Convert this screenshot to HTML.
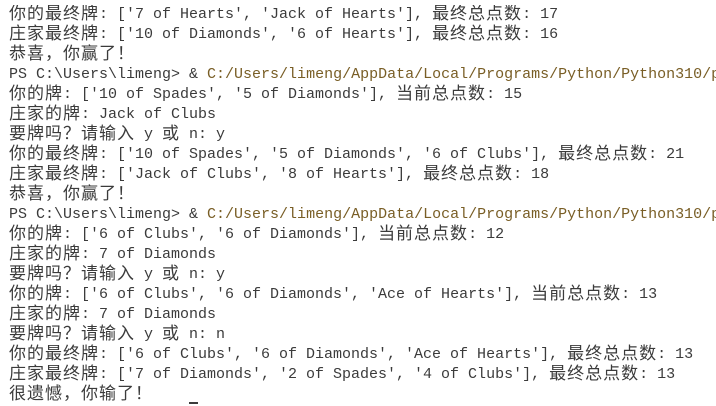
<!DOCTYPE html>
<html><head><meta charset="utf-8"><style>
html,body{margin:0;padding:0;background:#fff;width:716px;height:406px;overflow:hidden}
#t{position:absolute;left:9px;top:5px;width:707px;overflow:hidden;font-family:"Liberation Mono","Noto Sans CJK SC",monospace;font-size:15px;color:#3b3b3b}
#t div{height:20px;line-height:20px;overflow:visible;white-space:pre}
.c{letter-spacing:1px;font-size:17px;font-family:"Noto Sans CJK SC",sans-serif;display:inline-block;height:20px;line-height:20px;vertical-align:top;position:relative;top:-3px}
.y{color:#795e26}
#cur{position:absolute;left:189px;top:402px;width:9px;height:2px;background:#3b3b3b}
</style></head><body><div id="t">
<div><span class="c">你的最终牌</span>: ['7 of Hearts', 'Jack of Hearts'], <span class="c">最终总点数</span>: 17</div>
<div><span class="c">庄家最终牌</span>: ['10 of Diamonds', '6 of Hearts'], <span class="c">最终总点数</span>: 16</div>
<div><span class="c">恭喜，你赢了！</span></div>
<div>PS C:\Users\limeng&gt; &amp; <span class="y">C:/Users/limeng/AppData/Local/Programs/Python/Python310/python.exe</span></div>
<div><span class="c">你的牌</span>: ['10 of Spades', '5 of Diamonds'], <span class="c">当前总点数</span>: 15</div>
<div><span class="c">庄家的牌</span>: Jack of Clubs</div>
<div><span class="c">要牌吗？请输入</span> y <span class="c">或</span> n: y</div>
<div><span class="c">你的最终牌</span>: ['10 of Spades', '5 of Diamonds', '6 of Clubs'], <span class="c">最终总点数</span>: 21</div>
<div><span class="c">庄家最终牌</span>: ['Jack of Clubs', '8 of Hearts'], <span class="c">最终总点数</span>: 18</div>
<div><span class="c">恭喜，你赢了！</span></div>
<div>PS C:\Users\limeng&gt; &amp; <span class="y">C:/Users/limeng/AppData/Local/Programs/Python/Python310/python.exe</span></div>
<div><span class="c">你的牌</span>: ['6 of Clubs', '6 of Diamonds'], <span class="c">当前总点数</span>: 12</div>
<div><span class="c">庄家的牌</span>: 7 of Diamonds</div>
<div><span class="c">要牌吗？请输入</span> y <span class="c">或</span> n: y</div>
<div><span class="c">你的牌</span>: ['6 of Clubs', '6 of Diamonds', 'Ace of Hearts'], <span class="c">当前总点数</span>: 13</div>
<div><span class="c">庄家的牌</span>: 7 of Diamonds</div>
<div><span class="c">要牌吗？请输入</span> y <span class="c">或</span> n: n</div>
<div><span class="c">你的最终牌</span>: ['6 of Clubs', '6 of Diamonds', 'Ace of Hearts'], <span class="c">最终总点数</span>: 13</div>
<div><span class="c">庄家最终牌</span>: ['7 of Diamonds', '2 of Spades', '4 of Clubs'], <span class="c">最终总点数</span>: 13</div>
<div><span class="c">很遗憾，你输了！</span></div>
</div><div id="cur"></div></body></html>
